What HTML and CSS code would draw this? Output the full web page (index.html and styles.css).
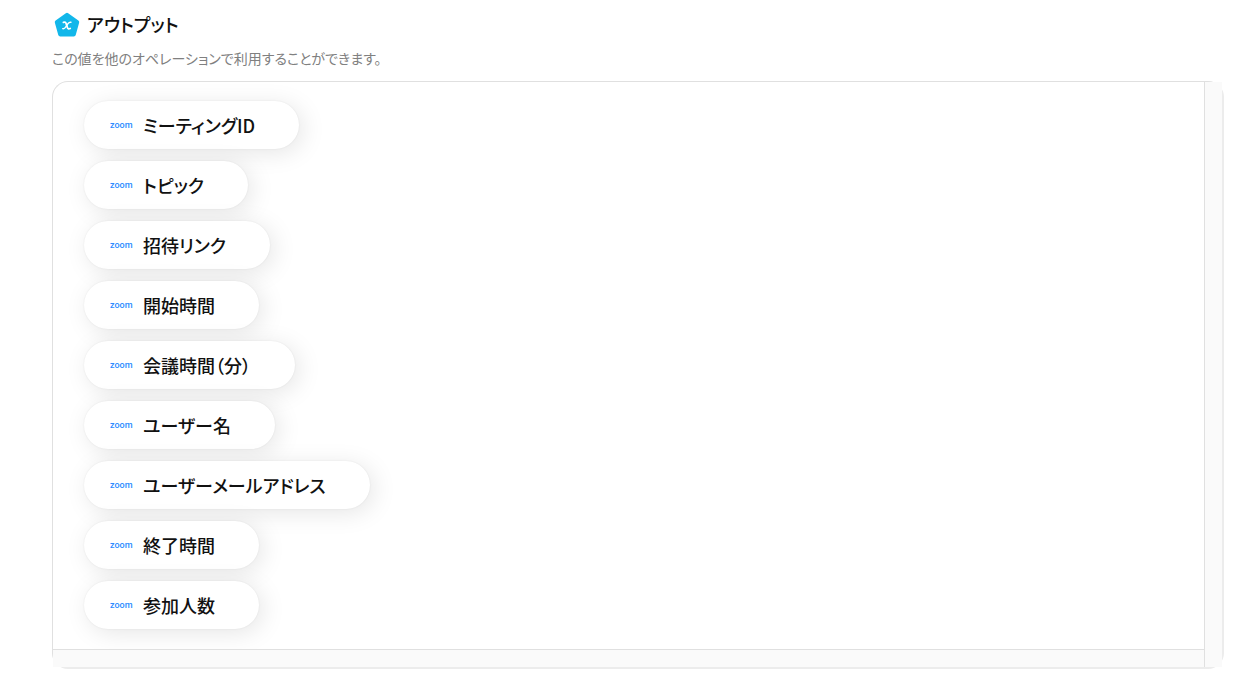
FILE: index.html
```
<!DOCTYPE html>
<html lang="ja">

<head>
    <meta charset="UTF-8">
    <meta name="viewport" content="width=device-width, initial-scale=1.0">
    <title>アウトプット</title>
    <link rel="stylesheet" href="styles.css">
</head>

<body>
    <main class="output">
        <div class="output-header">
            <svg class="output-icon" viewBox="0 0 26 26" aria-hidden="true">
                <path d="M13 2.8 L23.2 10.2 L19.8 22.4 H6.2 L2.8 10.2 Z" fill="#12b7ea" stroke="#12b7ea" stroke-width="4" stroke-linejoin="round" />
                <path d="M9.4 10.4 C11 9.7 11.7 10.3 12.2 11.8 L13.3 15.2 C13.8 16.8 14.6 17.3 16.2 16.5" fill="none" stroke="#fff" stroke-width="1.8" stroke-linecap="round" />
                <path d="M16.9 10.3 C15.5 10 14.8 10.6 14 11.7 L11.6 15.2 C10.8 16.4 10 17 8.7 16.6" fill="none" stroke="#fff" stroke-width="1.4" stroke-linecap="round" />
            </svg>
            <h1>アウトプット</h1>
        </div>
        <p class="output-note">この値を他のオペレーションで利用することができます。</p>

        <div class="panel">
            <ul class="output-list">
                <li class="pill"><span class="zoom-logo">zoom</span>ミーティングID</li>
                <li class="pill"><span class="zoom-logo">zoom</span>トピック</li>
                <li class="pill"><span class="zoom-logo">zoom</span>招待リンク</li>
                <li class="pill"><span class="zoom-logo">zoom</span>開始時間</li>
                <li class="pill"><span class="zoom-logo">zoom</span>会議時間（分）</li>
                <li class="pill"><span class="zoom-logo">zoom</span>ユーザー名</li>
                <li class="pill"><span class="zoom-logo">zoom</span>ユーザーメールアドレス</li>
                <li class="pill"><span class="zoom-logo">zoom</span>終了時間</li>
                <li class="pill"><span class="zoom-logo">zoom</span>参加人数</li>
            </ul>
            <div class="track-right"></div>
            <div class="track-bottom"></div>
        </div>
    </main>
</body>

</html>
```

FILE: styles.css
```
* {
    box-sizing: border-box;
}

body {
    margin: 0;
    background-color: #fff;
    color: #111;
    font-family: "Noto Sans CJK JP", sans-serif;
    font-feature-settings: "palt";
}

.output {
    padding: 12px 18px 7px 52px;
}

.output-header {
    display: flex;
    align-items: center;
    gap: 7px;
    height: 26px;
    padding-left: 2px;
}

.output-icon {
    width: 26px;
    height: 26px;
}

h1 {
    margin: 0;
    padding-bottom: 2px;
    font-size: 18px;
    font-weight: 500;
    line-height: 24px;
}

.output-note {
    margin: 10px 0 12px;
    color: #808080;
    font-size: 14px;
    line-height: 21px;
}

/* list area with its scroll tracks on the right and bottom */
.panel {
    display: grid;
    grid-template-columns: 1fr 18px;
    grid-template-rows: auto 18px;
    border: 1px solid #e0e0e0;
    border-right-width: 2px;
    border-bottom-width: 2px;
    border-right-color: #ececec;
    border-bottom-color: #ececec;
    border-radius: 16px;
}

.output-list {
    display: flex;
    flex-direction: column;
    align-items: flex-start;
    gap: 12px;
    margin: 0;
    padding: 19px 31px 20px;
    list-style: none;
}

.track-right {
    grid-row: 1 / 3;
    grid-column: 2;
    background-color: #fafafa;
    border-left: 1px solid #e0e0e0;
}

.track-bottom {
    grid-row: 2;
    grid-column: 1;
    background-color: #fafafa;
    border-top: 1px solid #e0e0e0;
}

.pill {
    display: flex;
    align-items: center;
    gap: 10px;
    height: 48px;
    padding: 0 44px 1px 26px;
    border-radius: 24px;
    background-color: #fff;
    box-shadow: 0 0 2px rgba(0, 0, 0, 0.08), 4px 4px 24px rgba(0, 0, 0, 0.1);
    font-size: 18px;
    font-weight: 500;
}

.zoom-logo {
    width: 23px;
    color: #2d8cff;
    font-family: Roboto, sans-serif;
    font-size: 9px;
    font-weight: 500;
}
```
